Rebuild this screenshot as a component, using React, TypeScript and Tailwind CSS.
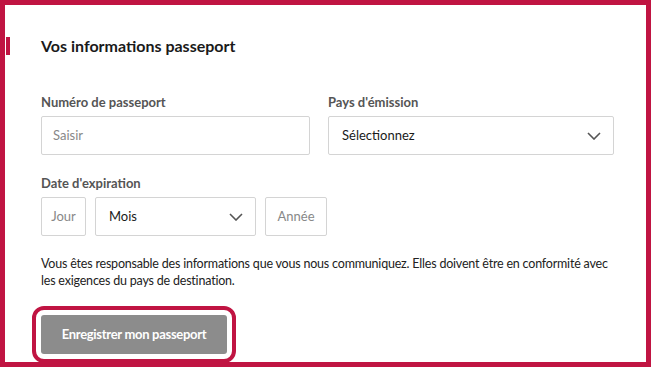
import React from 'react';

const crimson = 'border-[#c01442]';

function Chevron() {
  return (
    <svg width="14" height="8" viewBox="0 0 14 8" fill="none" className="shrink-0">
      <path d="M1 1l6 6 6-6" stroke="#555" strokeWidth="1.6" />
    </svg>
  );
}

export default function App() {
  return (
    <div
      className={`w-[651px] h-[367px] border-[5px] ${crimson} bg-white text-[#222] overflow-hidden`}
      style={{ fontFamily: 'Lato, "Open Sans", sans-serif' }}
    >
      {/* Heading */}
      <div className="flex items-center mt-[32px]">
        <div className="ml-[1px] w-[4px] h-[18px] bg-[#c01442]" />
        <h2 className="ml-[31px] text-[16px] leading-[18px] font-bold text-[#1a1a1a]">
          Vos informations passeport
        </h2>
      </div>

      <div className="pl-[36px] pr-[32px]">
        {/* Passport number / country */}
        <div className="grid grid-cols-[269px_286px] gap-x-[18px] mt-[39px]">
          <div>
            <label className="block text-[13px] leading-[16px] font-bold text-[#555]">
              Numéro de passeport
            </label>
            <div className="mt-[6px] h-[39px] border border-[#d4d4d4] rounded-[2px] flex items-center px-[11px] text-[13px] text-[#888]">
              Saisir
            </div>
          </div>
          <div>
            <label className="block text-[13px] leading-[16px] font-bold text-[#555]">
              Pays d'émission
            </label>
            <div className="mt-[6px] h-[39px] border border-[#d4d4d4] rounded-[2px] flex items-center justify-between pl-[13px] pr-[12px] text-[13px] text-[#1a1a1a]">
              <span>Sélectionnez</span>
              <Chevron />
            </div>
          </div>
        </div>

        {/* Expiry date */}
        <label className="block mt-[20px] text-[13px] leading-[16px] font-bold text-[#555]">
          Date d'expiration
        </label>
        <div className="flex gap-[9px] mt-[6px]">
          <div className="w-[45px] h-[39px] border border-[#d4d4d4] rounded-[2px] flex items-center justify-center text-[13px] text-[#888]">
            Jour
          </div>
          <div className="w-[161px] h-[39px] border border-[#d4d4d4] rounded-[2px] flex items-center justify-between pl-[13px] pr-[12px] text-[13px] text-[#1a1a1a]">
            <span>Mois</span>
            <Chevron />
          </div>
          <div className="w-[62px] h-[39px] border border-[#d4d4d4] rounded-[2px] flex items-center justify-center text-[13px] text-[#888]">
            Année
          </div>
        </div>

        <p className="mt-[19px] text-[12.5px] tracking-[-0.2px] leading-[17px] text-[#222]">
          Vous êtes responsable des informations que vous nous communiquez. Elles doivent être en conformité avec
          les exigences du pays de destination.
        </p>

        <button className="mt-[26px] w-[186px] h-[39px] rounded-[3px] bg-[#8c8c8c] text-white text-[13px] tracking-[-0.3px] font-bold outline-4 outline-offset-[5px] outline-[#c01442]">
          Enregistrer mon passeport
        </button>
      </div>
    </div>
  );
}
